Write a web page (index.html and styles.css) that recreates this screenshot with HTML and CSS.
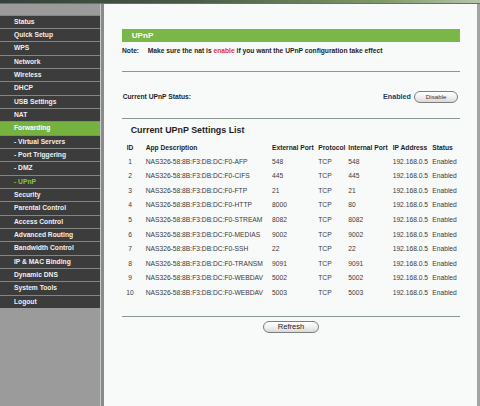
FILE: index.html
```html
<!DOCTYPE html>
<html>
<head>
<meta charset="utf-8">
<link rel="stylesheet" href="styles.css">
</head>
<body>
<div class="topbar"></div>
<div class="page">
  <nav class="sidebar">
    <ul class="menu">
      <li class="item">Status</li>
      <li class="item">Quick Setup</li>
      <li class="item">WPS</li>
      <li class="item">Network</li>
      <li class="item">Wireless</li>
      <li class="item">DHCP</li>
      <li class="item">USB Settings</li>
      <li class="item">NAT</li>
      <li class="item active">Forwarding</li>
      <li class="item">- Virtual Servers</li>
      <li class="item">- Port Triggering</li>
      <li class="item">- DMZ</li>
      <li class="item current">- UPnP</li>
      <li class="item">Security</li>
      <li class="item">Parental Control</li>
      <li class="item">Access Control</li>
      <li class="item">Advanced Routing</li>
      <li class="item">Bandwidth Control</li>
      <li class="item">IP &amp; MAC Binding</li>
      <li class="item">Dynamic DNS</li>
      <li class="item">System Tools</li>
      <li class="item">Logout</li>
    </ul>
  </nav>
  <div class="divider"></div>
  <main class="content">
    <div class="titlebar">UPnP</div>
    <div class="note"><span class="note-label">Note:</span>Make sure the nat is <span class="red">enable</span> if you want the UPnP configuration take effect</div>
    <div class="rule rule-1"></div>
    <div class="status-row">
      <span class="status-label">Current UPnP Status:</span>
      <span class="status-right"><span class="enabled">Enabled</span><button class="btn btn-disable">Disable</button></span>
    </div>
    <div class="rule rule-2"></div>
    <h2 class="list-title">Current UPnP Settings List</h2>
    <table class="list">
      <colgroup>
        <col class="c-id"><col class="c-app"><col class="c-ext"><col class="c-proto"><col class="c-int"><col class="c-ip"><col class="c-status">
      </colgroup>
      <thead>
        <tr><th class="id">ID</th><th>App Description</th><th>External Port</th><th>Protocol</th><th>Internal Port</th><th>IP Address</th><th>Status</th></tr>
      </thead>
      <tbody>
        <tr><td class="id">1</td><td>NAS326-58:8B:F3:DB:DC:F0-AFP</td><td>548</td><td>TCP</td><td>548</td><td>192.168.0.5</td><td>Enabled</td></tr>
        <tr><td class="id">2</td><td>NAS326-58:8B:F3:DB:DC:F0-CIFS</td><td>445</td><td>TCP</td><td>445</td><td>192.168.0.5</td><td>Enabled</td></tr>
        <tr><td class="id">3</td><td>NAS326-58:8B:F3:DB:DC:F0-FTP</td><td>21</td><td>TCP</td><td>21</td><td>192.168.0.5</td><td>Enabled</td></tr>
        <tr><td class="id">4</td><td>NAS326-58:8B:F3:DB:DC:F0-HTTP</td><td>8000</td><td>TCP</td><td>80</td><td>192.168.0.5</td><td>Enabled</td></tr>
        <tr><td class="id">5</td><td>NAS326-58:8B:F3:DB:DC:F0-STREAM</td><td>8082</td><td>TCP</td><td>8082</td><td>192.168.0.5</td><td>Enabled</td></tr>
        <tr><td class="id">6</td><td>NAS326-58:8B:F3:DB:DC:F0-MEDIAS</td><td>9002</td><td>TCP</td><td>9002</td><td>192.168.0.5</td><td>Enabled</td></tr>
        <tr><td class="id">7</td><td>NAS326-58:8B:F3:DB:DC:F0-SSH</td><td>22</td><td>TCP</td><td>22</td><td>192.168.0.5</td><td>Enabled</td></tr>
        <tr><td class="id">8</td><td>NAS326-58:8B:F3:DB:DC:F0-TRANSM</td><td>9091</td><td>TCP</td><td>9091</td><td>192.168.0.5</td><td>Enabled</td></tr>
        <tr><td class="id">9</td><td>NAS326-58:8B:F3:DB:DC:F0-WEBDAV</td><td>5002</td><td>TCP</td><td>5002</td><td>192.168.0.5</td><td>Enabled</td></tr>
        <tr><td class="id">10</td><td>NAS326-58:8B:F3:DB:DC:F0-WEBDAV</td><td>5003</td><td>TCP</td><td>5003</td><td>192.168.0.5</td><td>Enabled</td></tr>
      </tbody>
    </table>
    <div class="rule rule-3"></div>
    <div class="actions"><button class="btn btn-refresh">Refresh</button></div>
  </main>
</div>
</body>
</html>
```

FILE: styles.css
```css
html, body {
  margin: 0;
  padding: 0;
}
body {
  width: 480px;
  height: 406px;
  overflow: hidden;
  font-family: "Liberation Sans", Arial, sans-serif;
  background: #9b9b9b;
}
.topbar {
  height: 3px;
  background: linear-gradient(to right, #34403a 0%, #4a5a48 40%, #7f9b68 80%, #b7c4ad 100%);
  border-bottom: 1px solid #6d6d6d;
}
.page {
  display: flex;
  height: 402px;
}
.sidebar {
  width: 101px;
  background: #9b9b9b;
  padding-top: 10.7px;
  box-sizing: border-box;
}
.menu {
  list-style: none;
  margin: 0;
  padding: 0;
}
.item {
  height: 12.33px;
  line-height: 12.33px;
  border-top: 1px solid #858585;
  background: #3c3c3c;
  color: #f0f0f0;
  font-weight: bold;
  font-size: 6.7px;
  padding-left: 14px;
  white-space: nowrap;
}
.item.active {
  background: #76b23f;
  color: #ffffff;
}
.item.current {
  color: #8cc63f;
}
.divider {
  width: 3px;
  border-left: 1px solid #c9c9c9;
  background: #8a8a8a;
}
.content {
  flex: 1;
  background: #f8f9f9;
  border-right: 3px solid #a3a3a3;
  padding: 25.3px 17px 0 18px;
  box-sizing: border-box;
}
.titlebar {
  height: 13px;
  line-height: 13px;
  background: #7ab648;
  color: #ffffff;
  font-weight: bold;
  font-size: 8.1px;
  padding-left: 9.7px;
}
.note {
  margin-top: 4.4px;
  height: 8px;
  line-height: 8px;
  font-size: 6.7px;
  font-weight: bold;
  color: #1e1e1e;
  white-space: nowrap;
}
.note-label {
  display: inline-block;
  width: 25.7px;
}
.red {
  color: #d8382c;
}
.rule {
  height: 0;
  border-top: 1px solid #8a9893;
}
.rule-1 {
  margin-top: 16.3px;
}
.status-row {
  margin-top: 18.7px;
  height: 12px;
  display: flex;
  align-items: center;
  justify-content: space-between;
  font-size: 6.7px;
  font-weight: bold;
  color: #1e1e1e;
}
.status-label {
  padding-left: 0.7px;
}
.status-right {
  display: flex;
  align-items: center;
  gap: 3px;
  margin-right: 1.7px;
}
.enabled {
  color: #1c3b6f;
  font-size: 7.2px;
}
.btn {
  font-family: "Liberation Sans", Arial, sans-serif;
  border: 1px solid #7d7d7d;
  border-radius: 7px;
  background: linear-gradient(to bottom, #ffffff 0%, #f0f0f0 50%, #d9d9d9 100%);
  color: #222;
  padding: 0;
  margin: 0;
  box-sizing: border-box;
}
.btn-disable {
  width: 44.3px;
  height: 11.7px;
  font-size: 6.2px;
  color: #333;
}
.rule-2 {
  margin-top: 15.6px;
}
.list-title {
  margin: 6.2px 0 0 0;
  height: 11px;
  line-height: 11px;
  font-size: 8.9px;
  font-weight: bold;
  color: #1e1e1e;
  padding-left: 8.7px;
}
.list {
  margin-top: 4.95px;
  width: 338px;
  table-layout: fixed;
  border-collapse: collapse;
  font-size: 6.7px;
}
.c-id { width: 23.7px; }
.c-app { width: 126.3px; }
.c-ext { width: 46.3px; }
.c-proto { width: 30px; }
.c-int { width: 44.4px; }
.c-ip { width: 39.6px; }
.list th, .list td {
  padding: 0;
  text-align: left;
  white-space: nowrap;
  overflow: visible;
}
.list th {
  height: 13.25px;
  line-height: 13.25px;
  font-weight: bold;
  color: #1e1e1e;
}
.list td {
  height: 14.6px;
  line-height: 14.6px;
  color: #3a3a3a;
}
.list .id {
  text-align: center;
  padding-right: 7.7px;
  box-sizing: border-box;
}
.rule-3 {
  margin-top: 15px;
}
.actions {
  margin-top: 4.3px;
  display: flex;
  justify-content: center;
}
.btn-refresh {
  width: 55.7px;
  height: 11.7px;
  font-size: 7.6px;
}
```
